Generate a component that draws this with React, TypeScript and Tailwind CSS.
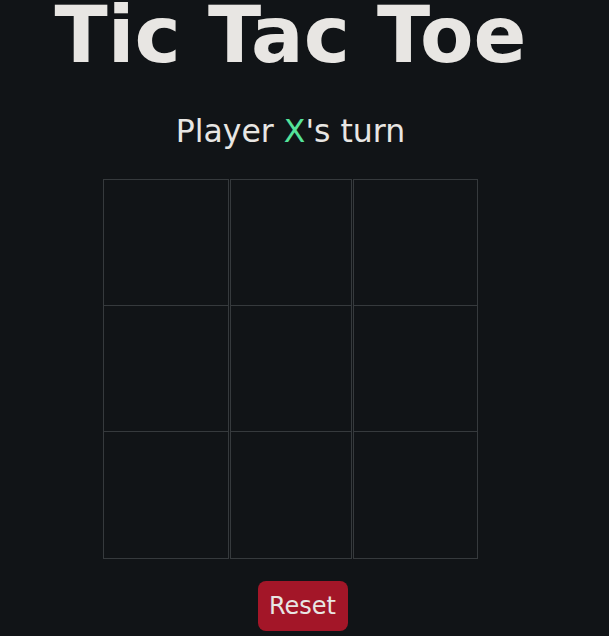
import { useState } from 'react'

type Cell = 'X' | 'O' | null

// Border layout per cell: the board has a 1px gap between columns,
// while rows share their dividing line.
const colClass = ['w-[126px] border-l border-r', 'w-[122px] border-l border-r', 'w-[125px] border-l border-r']
const rowClass = ['h-[127px] border-t border-b', 'h-[126px] border-b', 'h-[127px] border-b']

export default function App() {
  const [cells, setCells] = useState<Cell[]>(Array(9).fill(null))
  const [turn, setTurn] = useState<'X' | 'O'>('X')

  const play = (i: number) => {
    if (cells[i]) return
    const next = [...cells]
    next[i] = turn
    setCells(next)
    setTurn(turn === 'X' ? 'O' : 'X')
  }

  const reset = () => {
    setCells(Array(9).fill(null))
    setTurn('X')
  }

  return (
    <div className="min-h-[636px] w-full overflow-hidden bg-[#111417] font-['DejaVu_Sans',Verdana,sans-serif] text-[#e8e6e3]">
      <div className="flex flex-col items-center pr-[28px]">
        <h1 className="mt-[-10px] text-[78px] font-bold leading-[90px]">
          Tic Tac Toe
        </h1>
        <p className="mt-[29px] text-[31.5px] leading-[44px]">
          Player <span className="text-[#55e39a]">{turn}</span>'s turn
        </p>
        <div className="mt-[26px] flex flex-col">
          {[0, 1, 2].map(r => (
            <div key={r} className="flex gap-[1px]">
              {[0, 1, 2].map(c => {
                const i = r * 3 + c
                return (
                  <button
                    key={c}
                    onClick={() => play(i)}
                    className={`${colClass[c]} ${rowClass[r]} flex items-center justify-center border-[#363a3d] bg-[#111417] text-[64px] font-bold`}
                  >
                    {cells[i]}
                  </button>
                )
              })}
            </div>
          ))}
        </div>
      </div>
      <div className="mt-[22px] flex justify-center pr-[4px]">
        <button
          onClick={reset}
          className="h-[50px] w-[90px] rounded-[8px] bg-[#a31628] text-[24px] text-[#e8e6e3]"
        >
          Reset
        </button>
      </div>
    </div>
  )
}
